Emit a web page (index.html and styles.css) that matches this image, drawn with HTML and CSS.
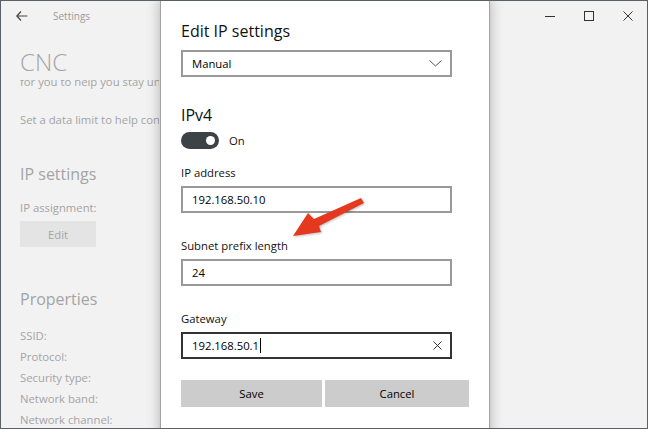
FILE: index.html
```html
<!DOCTYPE html>
<html>
<head>
  <title>Edit IP settings</title>
  <meta name="viewport" content="width=device-width, initial-scale=1.0">
  <link rel="stylesheet" href="styles.css">
</head>
<body>
  <div class="screen">
    <div class="window">
      <header class="titlebar">
        <span class="back">
          <svg width="12" height="10" viewBox="0 0 12 10"><path d="M5 0.5 L0.8 5 L5 9.5 M0.8 5 H11.5" fill="none" stroke="#444" stroke-width="1.2"/></svg>
        </span>
        <span class="app-name">Settings</span>
        <div class="controls">
          <span class="ctrl"><svg width="10" height="10" viewBox="0 0 10 10"><path d="M0 5.5 H10" stroke="#333" stroke-width="1"/></svg></span>
          <span class="ctrl"><svg width="10" height="10" viewBox="0 0 10 10"><rect x="0.5" y="0.5" width="9" height="9" fill="none" stroke="#333" stroke-width="1"/></svg></span>
          <span class="ctrl"><svg width="10" height="10" viewBox="0 0 10 10"><path d="M0.5 0.5 L9.5 9.5 M9.5 0.5 L0.5 9.5" stroke="#333" stroke-width="1"/></svg></span>
        </div>
      </header>

      <main class="page">
        <h1 class="page-title">CNC</h1>
        <div class="clipped"><p>for you to help you stay under</p></div>
        <p class="line">Set a data limit to help control</p>

        <h2 class="section">IP settings</h2>
        <p class="line">IP assignment:</p>
        <span class="edit-btn">Edit</span>

        <h2 class="section section-props">Properties</h2>
        <ul class="props">
          <li>SSID:</li>
          <li>Protocol:</li>
          <li>Security type:</li>
          <li>Network band:</li>
          <li>Network channel:</li>
        </ul>
      </main>
    </div>

    <div class="dialog">
      <h2 class="dlg-title">Edit IP settings</h2>
      <div class="field select">
        <span>Manual</span>
        <svg width="13" height="7" viewBox="0 0 13 7"><path d="M0.5 0.5 L6.5 6 L12.5 0.5" fill="none" stroke="#555" stroke-width="1"/></svg>
      </div>

      <h3 class="dlg-sub">IPv4</h3>
      <div class="toggle-row">
        <span class="toggle"><span class="knob"></span></span>
        <span>On</span>
      </div>

      <label class="dlg-label">IP address</label>
      <div class="field">192.168.50.10</div>

      <label class="dlg-label">Subnet prefix length</label>
      <div class="field">24</div>

      <label class="dlg-label">Gateway</label>
      <div class="field focused">
        <span>192.168.50.1<span class="caret"></span></span>
        <svg width="9" height="9" viewBox="0 0 9 9"><path d="M0.5 0.5 L8.5 8.5 M8.5 0.5 L0.5 8.5" stroke="#333" stroke-width="1"/></svg>
      </div>

      <div class="actions">
        <span class="btn">Save</span>
        <span class="btn">Cancel</span>
      </div>
    </div>

    <svg class="pointer" width="90" height="60" viewBox="280 190 90 60">
      <polygon points="293,236 308,213 314,219 361,198 364,203 319,226 321,232" fill="#e5391f"/>
    </svg>
  </div>
</body>
</html>
```

FILE: styles.css
```css
* {
  box-sizing: border-box;
}

body {
  margin: 0;
  font-family: "Open Sans", "Noto Sans", sans-serif;
  background: #fff;
}

.screen {
  position: relative;
  width: 648px;
  height: 429px;
  border: 1px solid #5b6066;
  overflow: hidden;
  background: #f2f2f2;
}

/* settings window behind the dialog */

.titlebar {
  display: flex;
  align-items: center;
  height: 29px;
}

.back {
  display: flex;
  width: 52px;
  padding-left: 15px;
}

.app-name {
  font-size: 10px;
  color: #9b9b9b;
}

.controls {
  display: flex;
  margin-left: auto;
}

.ctrl {
  display: flex;
  justify-content: center;
  width: 39px;
}

.page {
  width: 158px;
  padding-left: 19px;
  overflow: hidden;
  white-space: nowrap;
  color: #a4a4a4;
}

.page-title {
  margin: 18px 0 0;
  font-size: 24px;
  font-weight: 300;
  line-height: 28px;
}

.clipped {
  height: 10px;
  margin-top: 4px;
  overflow: hidden;
}

.clipped p {
  margin: -6px 0 0;
  font-size: 11.3px;
  line-height: 16px;
}

.line {
  margin: 0;
  font-size: 11.3px;
  line-height: 16px;
}

.clipped + .line {
  margin-top: 22px;
}

.section {
  margin: 34px 0 14px;
  font-size: 16px;
  font-weight: 400;
  line-height: 24px;
}

.edit-btn {
  display: flex;
  align-items: center;
  justify-content: center;
  width: 76px;
  height: 26px;
  margin-top: 5px;
  background: #e4e4e4;
  font-size: 11.3px;
}

.section-props {
  margin: 40px 0 14px;
}

.props {
  margin: 0;
  padding: 0;
  list-style: none;
  font-size: 11.3px;
  line-height: 21px;
}

/* dialog */

.dialog {
  position: absolute;
  top: -2px;
  left: 159px;
  width: 330px;
  height: 440px;
  padding: 19px 20px 0;
  background: #fff;
  border: 1px solid #a3a3a3;
  box-shadow: 0 0 12px rgba(0, 0, 0, 0.28);
  color: #111;
}

.dlg-title {
  margin: 0;
  font-size: 16px;
  font-weight: 400;
  line-height: 24px;
}

.field {
  display: flex;
  align-items: center;
  justify-content: space-between;
  width: 271px;
  height: 27px;
  padding: 0 8px 0 9px;
  border: 2px solid #999;
  font-size: 11.3px;
  color: #000;
}

.select {
  margin-top: 7px;
}

.focused {
  border-color: #333;
}

.caret {
  display: inline-block;
  width: 1px;
  height: 15px;
  margin-left: 1px;
  vertical-align: -3px;
  background: #000;
}

.dlg-sub {
  margin: 26px 0 0;
  font-size: 16px;
  font-weight: 400;
  line-height: 24px;
}

.toggle-row {
  display: flex;
  align-items: center;
  gap: 10px;
  height: 17px;
  margin-top: 5px;
  font-size: 11.3px;
}

.toggle {
  display: flex;
  align-items: center;
  justify-content: flex-end;
  width: 38px;
  height: 17px;
  padding-right: 4px;
  border-radius: 9px;
  background: #3d4246;
}

.knob {
  width: 9px;
  height: 9px;
  border-radius: 50%;
  background: #fff;
}

.dlg-label {
  display: block;
  margin: 16px 0 5px;
  font-size: 11.3px;
  line-height: 16px;
}

.field + .dlg-label {
  margin-top: 25px;
}

.actions {
  display: flex;
  gap: 3px;
  margin-top: 21px;
}

.btn {
  display: flex;
  align-items: center;
  justify-content: center;
  width: 141px;
  height: 27px;
  background: #ccc;
  font-size: 11.3px;
  color: #000;
}

.btn + .btn {
  width: 144px;
}

.pointer {
  position: absolute;
  left: 279px;
  top: 189px;
  filter: drop-shadow(1px 1px 1px rgba(0, 0, 0, 0.25));
}
```
